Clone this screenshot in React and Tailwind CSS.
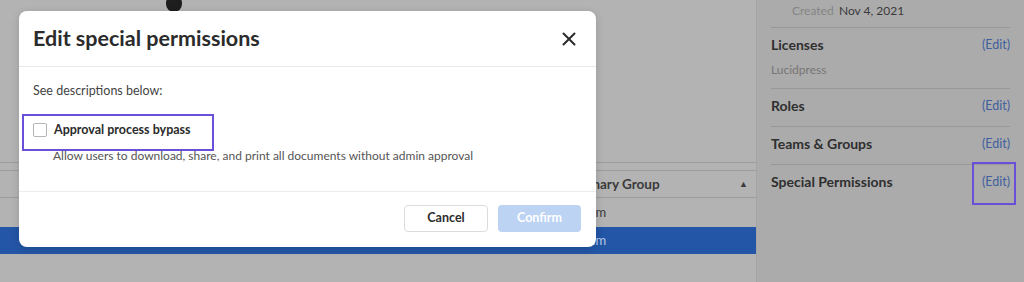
import React from "react";

const font = { fontFamily: "Lato, 'Noto Sans', sans-serif" };

function Section({ title, children, highlight }) {
  return (
    <div className="relative border-t border-[#989898] pt-[8px] pb-[11px]">
      <div className="flex items-center justify-between leading-[18px]">
        <span className="text-[14px] font-bold text-[#2f2f2f]">{title}</span>
        <span className="text-[12.5px] text-[#3f5f9f]">(Edit)</span>
      </div>
      {children}
      {highlight && (
        <div className="absolute right-[-6px] top-[-3px] h-[43px] w-[44px] border-2 border-[#6a4fd8]" />
      )}
    </div>
  );
}

export default function App() {
  return (
    <div className="relative h-[282px] w-[1024px] overflow-hidden bg-[#b3b3b3]" style={font}>
      <div className="flex h-full">
        {/* left main area */}
        <div className="relative flex w-[756px] flex-col">
          <div className="h-[162px] shrink-0">
            <div className="ml-[166px] mt-[-5px] h-[17px] w-[16px] rounded-full bg-[#1e1e1e]" />
          </div>
          <div className="h-[9px] border-t border-b border-[#9c9c9c]" />
          <div className="flex h-[27px] items-center border-b border-[#9c9c9c] pl-[572px] pr-[8px]">
            <span className="flex-1 text-[13.5px] font-bold text-[#3a3a3a]">Primary Group</span>
            <span className="text-[9px] text-[#3a3a3a]">▲</span>
          </div>
          <div className="flex h-[29px] items-center pl-[576px]">
            <span className="text-[13px] text-[#3a3a3a]">Team</span>
          </div>
          <div className="flex h-[27px] items-center bg-[#2356a6] pl-[576px]">
            <span className="text-[13px] text-[#b8c8e6]">Team</span>
          </div>
        </div>
        {/* right panel */}
        <div className="flex flex-1 flex-col border-l border-[#a4a4a4] bg-[#ababab] px-[14px]">
          <div className="flex h-[27px] items-start pl-[21px] pt-[3px] text-[12px] leading-[16px]">
            <span className="inline-block w-[47px] text-[#858585]">Created</span>
            <span className="text-[#3a3a3a]">Nov 4, 2021</span>
          </div>
          <Section title="Licenses">
            <div className="mt-[7px] mb-[-2px] text-[12px] leading-[18px] text-[#767676]">Lucidpress</div>
          </Section>
          <Section title="Roles" />
          <Section title="Teams & Groups" />
          <Section title="Special Permissions" highlight />
        </div>
      </div>

      {/* modal */}
      <div className="absolute left-[19px] top-[11px] flex h-[236px] w-[577px] flex-col rounded-[8px] bg-white shadow-[0_2px_8px_rgba(0,0,0,0.15)]">
        <div className="flex h-[56px] shrink-0 items-center justify-between border-b border-[#e8e8e8] pl-[14px] pr-[20px]">
          <span className="text-[21.5px] font-bold text-[#2b2b2b]">Edit special permissions</span>
          <svg width="14" height="14" viewBox="0 0 14 14" className="text-[#2b2b2b]">
            <path d="M1.5 1.5 L12.5 12.5 M12.5 1.5 L1.5 12.5" stroke="currentColor" strokeWidth="2" strokeLinecap="round" />
          </svg>
        </div>
        <div className="relative flex-1 pl-[14px] pt-[15px]">
          <div className="text-[12.5px] leading-[18px] text-[#444]">See descriptions below:</div>
          <div className="mt-[21px] flex items-center gap-[7px] leading-[18px]">
            <div className="h-[14px] w-[14px] rounded-[2px] border border-[#b5b5b5] bg-white" />
            <span className="text-[12.5px] font-bold text-[#2b2b2b]">Approval process bypass</span>
          </div>
          <div className="mt-[8px] pl-[20px] text-[12px] leading-[18px] text-[#555]">
            Allow users to download, share, and print all documents without admin approval
          </div>
          <div className="absolute left-[3px] top-[47px] h-[37px] w-[192px] border-2 border-[#6a4fd8]" />
        </div>
        <div className="flex h-[56px] shrink-0 items-start justify-end gap-[10px] border-t border-[#ececec] pr-[15px] pt-[13px]">
          <button className="h-[27px] w-[84px] rounded-[4px] border border-[#dcdcdc] bg-white text-[12.5px] font-bold text-[#2b2b2b]">
            Cancel
          </button>
          <button className="h-[27px] w-[83px] rounded-[4px] bg-[#bcd3f4] text-[12.5px] font-bold text-white">
            Confirm
          </button>
        </div>
      </div>
    </div>
  );
}
